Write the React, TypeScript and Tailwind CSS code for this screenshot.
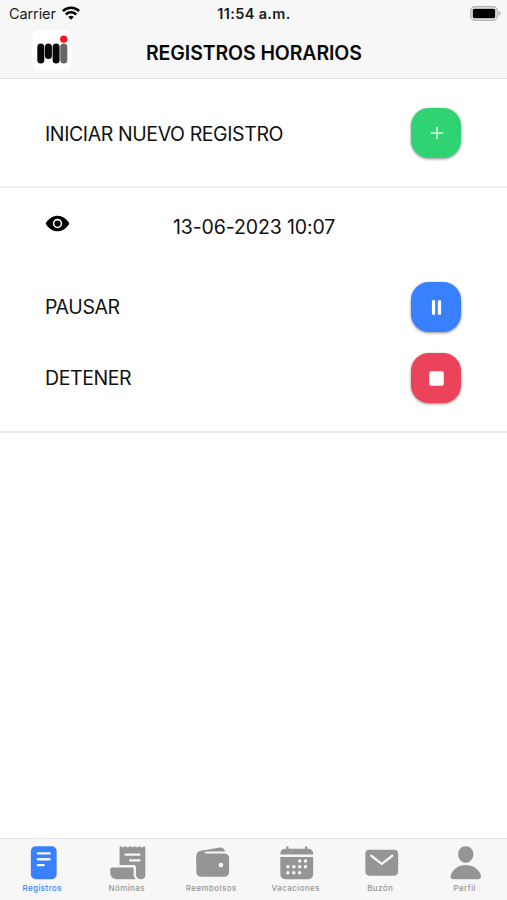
import type { ReactNode } from "react";
import {
  IoAddSharp,
  IoCalendar,
  IoEye,
  IoMail,
  IoPause,
  IoPerson,
  IoReader,
  IoReceipt,
  IoStop,
  IoWallet,
} from "react-icons/io5";

function StatusBar() {
  return (
    <div className="grid h-[27px] grid-cols-3 items-center pl-[9px] pr-[6px] text-[14.5px] leading-none text-[#1c1c1c]">
      <div className="flex items-center gap-[6px]">
        <span className="pt-px tracking-[-0.1px]">Carrier</span>
        <svg className="-mt-[2px] h-[14px] w-[18px]" viewBox="0 0 18 14" fill="none" stroke="#050505" strokeWidth="2.5">
          <path d="M0.9 5.2a11.5 11.5 0 0 1 16.2 0" />
          <path d="M3.8 8.5a7.4 7.4 0 0 1 10.4 0" />
          <path d="M9 13.8 6.2 11a4 4 0 0 1 5.6 0Z" fill="#050505" stroke="none" />
        </svg>
      </div>
      <span className="mr-[2px] justify-self-center whitespace-nowrap pt-[2px] text-[14.5px] font-semibold tracking-[0.35px]">
        11:54 a.m.
      </span>
      <svg className="-mt-px h-[15px] w-[31px] justify-self-end" viewBox="0 0 31 15">
        <rect x="0.8" y="0.8" width="26.4" height="13.4" rx="4" fill="#f7f7f7" stroke="#b5b5b5" strokeWidth="1.4" />
        <rect x="2.8" y="2.8" width="22.4" height="9.4" rx="1.5" fill="#000" />
        <path d="M28.5 5v5c1.6-.5 2-1.5 2-2.5s-.4-2-2-2.5Z" fill="#b5b5b5" />
      </svg>
    </div>
  );
}

function Logo() {
  return (
    <svg className="h-[40px] w-[40px]" viewBox="0 0 40 40">
      <rect x="0.5" width="39" height="40" rx="5" fill="#fff" />
      <g strokeWidth="7" strokeLinecap="round">
        <path d="M31.8 17v13" stroke="#666" />
        <path d="M8.8 17v13M16.4 17v8.5M24.1 17v13" stroke="#080808" />
      </g>
      <circle cx="31.7" cy="9.2" r="3.6" fill="#f5161b" />
    </svg>
  );
}

function ActionButton({ color, label, children }: { color: string; label: string; children: ReactNode }) {
  return (
    <button
      aria-label={label}
      className={`flex size-[50px] items-center justify-center rounded-[18px] pl-px text-white shadow-[0_1px_3px_rgba(0,0,0,0.45)] ${color}`}
    >
      {children}
    </button>
  );
}

const tabs = [
  { label: "Registros", Icon: IoReader, active: true },
  { label: "Nóminas", Icon: IoReceipt },
  { label: "Reembolsos", Icon: IoWallet },
  { label: "Vacaciones", Icon: IoCalendar },
  { label: "Buzón", Icon: IoMail },
  { label: "Perfil", Icon: IoPerson },
];

export default function App() {
  return (
    <div className="flex h-[900px] w-[507px] flex-col bg-white font-[Inter,sans-serif] text-[#111]">
      <header className="h-[79px] border-b border-[#dfdfdf] bg-[#f7f7f7]">
        <StatusBar />
        <div className="flex h-[51px] pl-[32px] pt-[3px]">
          <Logo />
          <h1 className="ml-[74px] mt-[10px] whitespace-nowrap text-[19.5px] font-semibold leading-[26px] tracking-[-0.1px] text-[#080808]">
            REGISTROS HORARIOS
          </h1>
        </div>
      </header>
      <main className="flex-1 text-[19.5px] leading-[26px] tracking-[-0.4px]">
        <section className="flex h-[109px] items-center justify-between border-b-2 border-[#f2f2f2] pl-[45px] pr-[46px]">
          <span className="pt-[2px]">INICIAR NUEVO REGISTRO</span>
          <ActionButton label="Iniciar" color="bg-[#2fd371]">
            <IoAddSharp size={20} stroke="currentColor" strokeWidth={8} />
          </ActionButton>
        </section>
        <section className="h-[245px] border-b-2 border-[#ebebeb] pl-[45px] pr-[46px] pt-[24px]">
          <div className="flex h-[36px]">
            <IoEye size={25} className="-mt-px text-black" />
            <span className="ml-[103px] mt-[2px] tracking-[-0.12px]">13-06-2023 10:07</span>
          </div>
          <div className="mt-[34px] flex h-[50px] items-center justify-between">
            <span>PAUSAR</span>
            <ActionButton label="Pausar" color="bg-[#3880ff]">
              <IoPause size={21} />
            </ActionButton>
          </div>
          <div className="mt-[21px] flex h-[50px] items-center justify-between">
            <span>DETENER</span>
            <ActionButton label="Detener" color="bg-[#eb445a]">
              <IoStop size={21} />
            </ActionButton>
          </div>
        </section>
      </main>
      <nav className="grid h-[62px] grid-cols-6 border-t border-[#e4e4e4] bg-[#f7f7f7]">
        {tabs.map(({ label, Icon, active }) => (
          <div
            key={label}
            className={`flex flex-col items-center pt-[4.5px] ${active ? "text-[#3880ff]" : "text-[#959595]"}`}
          >
            <Icon size={37.5} className="ml-[2px]" />
            <span className="mt-[2px] text-[8px] font-medium leading-[10px] tracking-[0.4px]">{label}</span>
          </div>
        ))}
      </nav>
    </div>
  );
}
